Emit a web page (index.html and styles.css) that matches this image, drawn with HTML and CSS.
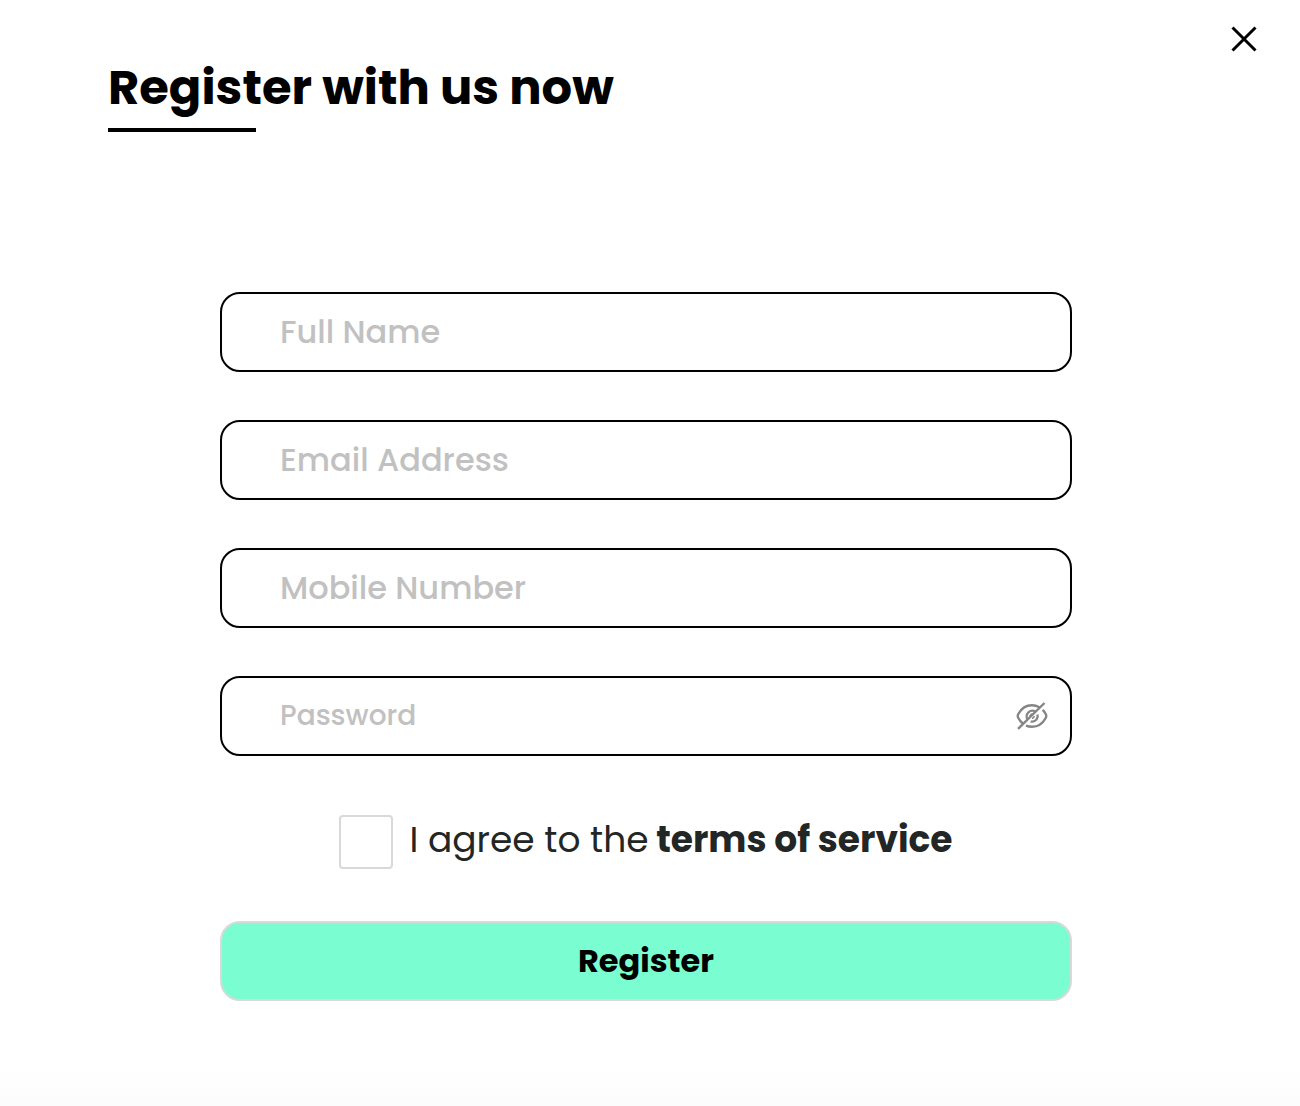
FILE: index.html
```
<!DOCTYPE html>
<html lang="en">
<head>
<meta charset="utf-8">
<meta name="viewport" content="width=device-width, initial-scale=1">
<title>Register</title>
<link rel="stylesheet" href="styles.css">
</head>
<body>
<main class="dialog">
  <header class="header">
    <h1 class="title">Register with us now</h1>
    <button class="close" type="button" aria-label="Close">
      <svg width="26" height="26" viewBox="0 0 26 26" fill="none" stroke="currentColor" stroke-width="3" aria-hidden="true"><path d="M1.5 1.5l23 23M24.5 1.5l-23 23"/></svg>
    </button>
  </header>
  <form class="form">
    <input class="field" type="text" placeholder="Full Name" aria-label="Full Name">
    <input class="field" type="email" placeholder="Email Address" aria-label="Email Address">
    <input class="field" type="tel" placeholder="Mobile Number" aria-label="Mobile Number">
    <div class="field password">
      <input class="password-input" type="password" placeholder="Password" aria-label="Password">
      <button class="reveal" type="button" aria-label="Show password">
        <svg width="32" height="28" viewBox="0 0 32 28" fill="none" stroke="currentColor" stroke-width="2.4" aria-hidden="true">
          <path d="M23.500 5.200C21.200 4 18.800 3.200 16 3.200C9.500 3.200 5 7 2.300 12C1.600 13.300 1.600 14.700 2.300 16C3.500 18.200 5 20.100 6.800 21.500"/>
          <path d="M10 23.700C12 24.500 14 24.800 16 24.800C22.500 24.800 27 21 29.700 16C30.400 14.700 30.400 13.300 29.700 12C28.900 10.500 27.900 9.100 26.700 7.900"/>
          <path stroke-width="2.200" d="M19.500 9.700A5.700 5.700 0 0 0 11.500 17.400M21.500 12.600A5.700 5.700 0 0 1 14.600 19.500"/>
          <path stroke-width="1.400" d="M17 12.200A2.300 2.300 0 0 0 14 15M18.200 14A2.300 2.300 0 0 1 16 16.200"/>
          <path d="M2 26.800L28.500 1"/>
        </svg>
      </button>
    </div>
    <div class="agree">
      <input class="checkbox" id="agree" type="checkbox">
      <label for="agree">I agree to the<a class="terms" href="#terms"> terms of service</a></label>
    </div>
    <button class="submit" type="submit">Register</button>
  </form>
</main>
</body>
</html>
```
FILE: styles.css
```
* {
  box-sizing: border-box;
}

body {
  margin: 0;
  min-height: 100vh;
  background: linear-gradient(to bottom, #fff calc(100% - 44px), #fcfcfc 100%);
  color: #000;
  font-family: Poppins, Inter, sans-serif;
}

button,
input {
  font: inherit;
}

.header {
  display: flex;
  justify-content: space-between;
  align-items: flex-start;
  padding: 26px 43px 0 108px;
}

.title {
  margin: 32px 0 0;
  font-size: 48px;
  line-height: 60px;
  font-weight: 700;
}

.title::after {
  content: "";
  display: block;
  width: 148px;
  height: 4px;
  margin-top: 10px;
  background: #000;
}

.close,
.reveal {
  display: flex;
  padding: 0;
  border: 0;
  background: none;
  color: #000;
  cursor: pointer;
}

.form {
  display: flex;
  flex-direction: column;
  gap: 48px;
  width: calc(100% - 64px);
  max-width: 860px;
  margin: 160px auto 0;
  padding-right: 8px;
}

.field {
  width: 100%;
  height: 80px;
  padding: 0 58px;
  border: 2px solid #000;
  border-radius: 20px;
  background: #fff;
  font-size: 32px;
  font-weight: 500;
}

.field::placeholder,
.password-input::placeholder {
  color: #c1c1c1;
  opacity: 1;
}

.password {
  display: flex;
  align-items: center;
  padding-right: 22px;
}

.password-input {
  flex: 1;
  min-width: 0;
  padding: 0;
  border: 0;
  background: none;
  font-size: 28px;
}

.reveal {
  color: #858585;
}

.agree {
  display: flex;
  align-items: flex-start;
  justify-content: center;
  gap: 16px;
  margin: 11px 0 4px;
  color: #222625;
  font-size: 36px;
  line-height: 50px;
}

.checkbox {
  flex: none;
  appearance: none;
  width: 54px;
  height: 54px;
  margin: 0;
  border: 2px solid #d9d9d9;
  border-radius: 4px;
  background: #fff;
}

.checkbox:checked {
  background: #7afdd0;
}

.terms {
  color: inherit;
  font-weight: 700;
  text-decoration: none;
}

.submit {
  height: 80px;
  border: 2px solid #d9d9d9;
  border-radius: 20px;
  background: #7afdd0;
  color: #000;
  font-size: 32px;
  font-weight: 700;
  cursor: pointer;
}
```
